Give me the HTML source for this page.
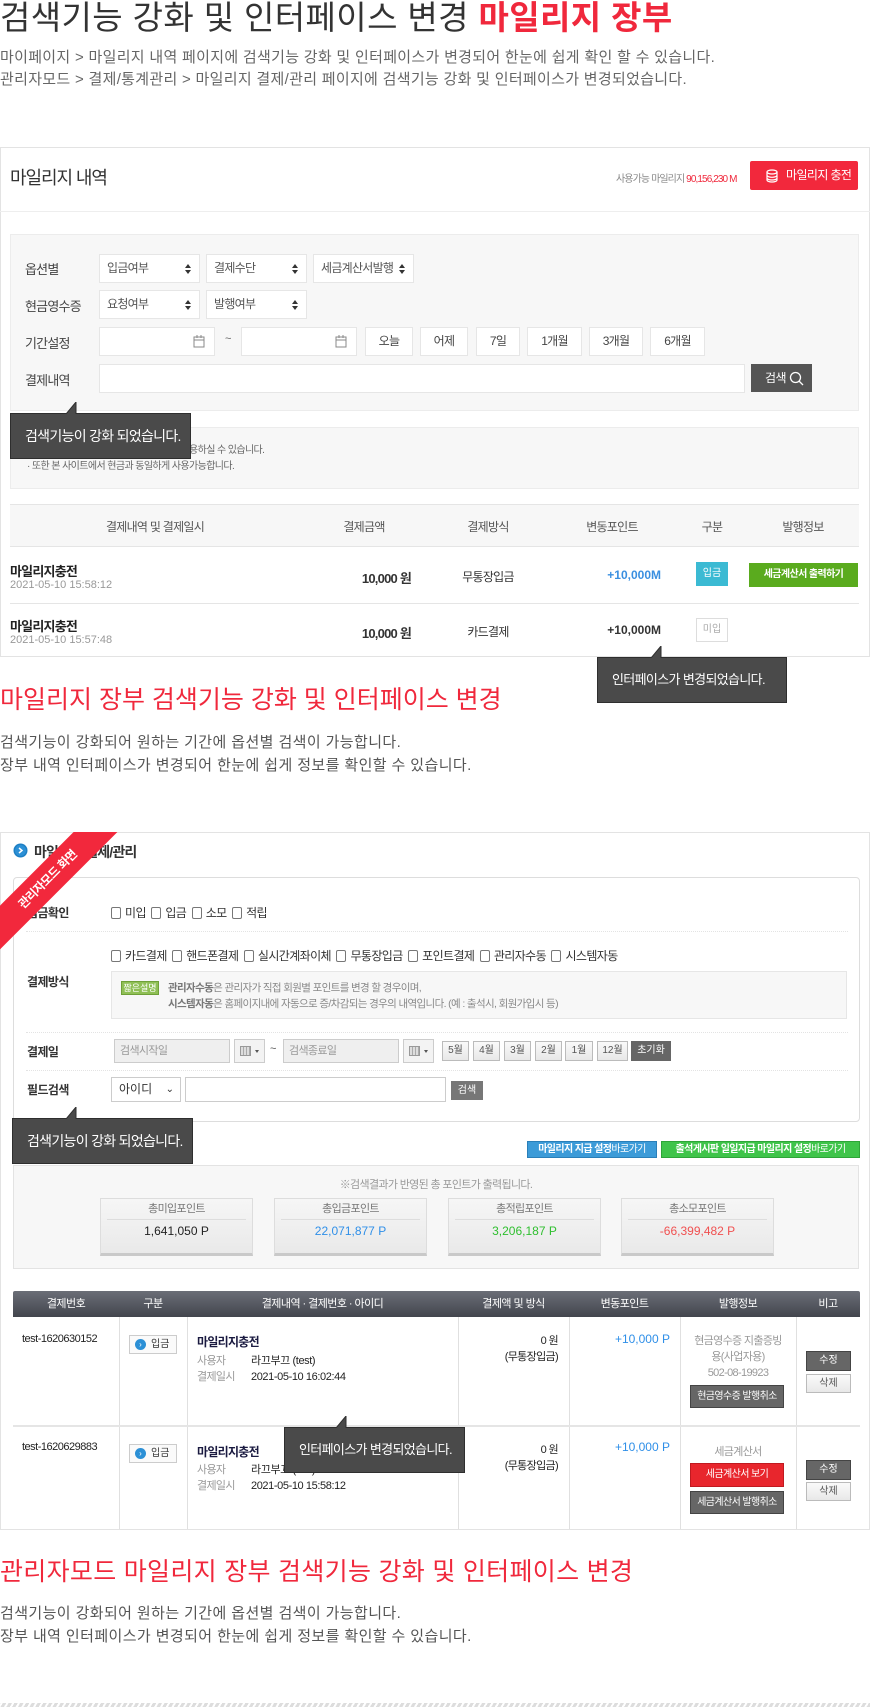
<!DOCTYPE html>
<html><head><meta charset="utf-8">
<style>
*{margin:0;padding:0;box-sizing:border-box}
body{width:870px;height:1707px;position:relative;background:#fff;font-family:"Liberation Sans","Noto Sans CJK KR",sans-serif;overflow:hidden;color:#333}
.a{position:absolute;white-space:nowrap}
.t{letter-spacing:-0.06em}
.box{position:absolute;border:1px solid #e3e3e3;background:#fff}
.sel{position:absolute;background:#fff;border:1px solid #e6e6e6;height:29px;font-size:12px;color:#555;line-height:27px;padding-left:7px;letter-spacing:-0.06em}
.sel:after{content:"";position:absolute;right:8px;top:9px;border-left:3px solid transparent;border-right:3px solid transparent;border-bottom:4px solid #333}
.sel:before{content:"";position:absolute;right:8px;top:15px;border-left:3px solid transparent;border-right:3px solid transparent;border-top:4px solid #333}
.btn{position:absolute;background:#fff;border:1px solid #e6e6e6;height:29px;font-size:12px;color:#444;line-height:27px;text-align:center;letter-spacing:-0.06em}
.lbl{position:absolute;font-size:13px;color:#444;letter-spacing:-0.06em}
.tip{position:absolute;background:#4a4a4a;border:1px solid #2e2e2e;color:#fff;font-size:14px;line-height:44px;padding-left:14px;letter-spacing:-0.05em}
.cb{display:inline-block;width:10px;height:12px;border:1px solid #777;border-radius:2px;vertical-align:-2px;margin-right:4px;background:#fff}
.sm{position:absolute;font-size:12px;color:#333;letter-spacing:-0.05em}
.gb{position:absolute;border:1px solid #bbb;background:linear-gradient(#fafafa,#e8e8e8);font-size:10px;color:#555;text-align:center;line-height:18px}
.sumb{position:absolute;background:linear-gradient(#f6f6f6,#e9e9e9);border:1px solid #ddd;border-bottom:3px solid #c9c9c9;width:153px;height:58px;text-align:center}
.th{position:absolute;top:1291px;font-size:11px;color:#fff;line-height:26px;text-align:center;letter-spacing:-0.05em}
.vl{position:absolute;width:1px;background:#e0e0e0}
</style></head><body>

<div class="a" style="left:0;top:-2px;font-size:33px;letter-spacing:0.4px;color:#333;line-height:40px">검색기능 강화 및 인터페이스 변경 <span style="color:#f0283c;font-weight:bold">마일리지 장부</span></div>
<div class="a" style="left:0;top:47px;font-size:15px;color:#666;letter-spacing:0.3px;line-height:22px">마이페이지 &gt; 마일리지 내역 페이지에 검색기능 강화 및 인터페이스가 변경되어 한눈에 쉽게 확인 할 수 있습니다.<br>관리자모드 &gt; 결제/통계관리 &gt; 마일리지 결제/관리 페이지에 검색기능 강화 및 인터페이스가 변경되었습니다.</div>

<!-- Card 1 -->
<div class="box" style="left:0;top:147px;width:870px;height:510px"></div>
<div class="a" style="left:0;top:211px;width:870px;height:1px;background:#eee"></div>
<div class="a t" style="left:10px;top:164px;font-size:18px;color:#333">마일리지 내역</div>
<div class="a" style="left:616px;top:170px;font-size:10px;color:#888;letter-spacing:-0.09em">사용가능 마일리지 <span style="color:#f0283c">90,156,230 M</span></div>
<div class="a" style="left:750px;top:161px;width:108px;height:29px;background:#f2283c;border-radius:2px;color:#fff;font-size:12px;line-height:29px;padding-left:36px;letter-spacing:-0.05em">마일리지 충전
<svg style="position:absolute;left:16px;top:8px" width="12" height="14" viewBox="0 0 12 14"><g fill="none" stroke="#fff" stroke-width="1.2"><ellipse cx="6" cy="3" rx="5" ry="2"/><path d="M1 3v8c0 1.1 2.2 2 5 2s5-.9 5-2V3M1 6.3c0 1.1 2.2 2 5 2s5-.9 5-2M1 9c0 1.1 2.2 2 5 2s5-.9 5-2"/></g></svg></div>

<div class="a" style="left:10px;top:234px;width:849px;height:177px;background:#f7f7f7;border:1px solid #ececec"></div>
<div class="lbl" style="left:25px;top:259px">옵션별</div>
<div class="lbl" style="left:25px;top:296px">현금영수증</div>
<div class="lbl" style="left:25px;top:333px">기간설정</div>
<div class="lbl" style="left:25px;top:370px">결제내역</div>
<div class="sel" style="left:99px;top:254px;width:101px">입금여부</div>
<div class="sel" style="left:206px;top:254px;width:101px">결제수단</div>
<div class="sel" style="left:313px;top:254px;width:101px">세금계산서발행</div>
<div class="sel" style="left:99px;top:290px;width:101px">요청여부</div>
<div class="sel" style="left:206px;top:290px;width:101px">발행여부</div>
<div class="btn" style="left:99px;top:327px;width:116px"></div>
<div class="btn" style="left:241px;top:327px;width:116px"></div>
<svg class="a" style="left:193px;top:335px" width="12" height="13"><rect x="1" y="2" width="10" height="10" fill="none" stroke="#888"/><path d="M1 5h10M4 0v3M8 0v3" stroke="#888"/></svg>
<svg class="a" style="left:335px;top:335px" width="12" height="13"><rect x="1" y="2" width="10" height="10" fill="none" stroke="#888"/><path d="M1 5h10M4 0v3M8 0v3" stroke="#888"/></svg>
<div class="a" style="left:225px;top:333px;font-size:11px;color:#666">~</div>
<div class="btn" style="left:365px;top:327px;width:48px">오늘</div>
<div class="btn" style="left:420px;top:327px;width:48px">어제</div>
<div class="btn" style="left:476px;top:327px;width:44px">7일</div>
<div class="btn" style="left:527px;top:327px;width:55px">1개월</div>
<div class="btn" style="left:589px;top:327px;width:54px">3개월</div>
<div class="btn" style="left:650px;top:327px;width:55px">6개월</div>
<div class="btn" style="left:99px;top:364px;width:646px"></div>
<div class="a" style="left:751px;top:364px;width:61px;height:28px;background:#555;color:#fff;font-size:12px;line-height:28px;padding-left:14px;letter-spacing:-0.05em">검색
<svg style="position:absolute;left:38px;top:7px" width="15" height="15"><circle cx="6.5" cy="6.5" r="5" fill="none" stroke="#fff" stroke-width="1.3"/><path d="M10 10l4 4" stroke="#fff" stroke-width="1.3"/></svg></div>

<div class="a" style="left:10px;top:427px;width:849px;height:62px;background:#f7f7f7;border:1px solid #ececec"></div>
<div class="a t" style="left:27px;top:443px;font-size:10px;color:#666;line-height:16px">· 본 마일리지는 유효기간 없이 언제든지 사용하실 수 있습니다.<br>· 또한 본 사이트에서 현금과 동일하게 사용가능합니다.</div>

<div class="tip" style="left:10px;top:413px;width:181px;height:46px">검색기능이 강화 되었습니다.</div>
<svg class="a" style="left:66px;top:402px" width="12" height="12"><polygon points="0,12 10,0 10,12" fill="#4a4a4a"/><polyline points="0,12 10,0 10,12" fill="none" stroke="#2e2e2e"/></svg>

<div class="a" style="left:10px;top:504px;width:849px;height:43px;background:#f7f7f7;border-top:1px solid #e5e5e5;border-bottom:1px solid #e5e5e5"></div>
<div class="a t" style="left:0;top:518px;width:310px;text-align:center;font-size:12px;color:#555">결제내역 및 결제일시</div>
<div class="a t" style="left:314px;top:518px;width:100px;text-align:center;font-size:12px;color:#555">결제금액</div>
<div class="a t" style="left:438px;top:518px;width:100px;text-align:center;font-size:12px;color:#555">결제방식</div>
<div class="a t" style="left:562px;top:518px;width:100px;text-align:center;font-size:12px;color:#555">변동포인트</div>
<div class="a t" style="left:662px;top:518px;width:100px;text-align:center;font-size:12px;color:#555">구분</div>
<div class="a t" style="left:753px;top:518px;width:100px;text-align:center;font-size:12px;color:#555">발행정보</div>

<div class="a t" style="left:10px;top:561px;font-size:13px;font-weight:bold;color:#222">마일리지충전</div>
<div class="a" style="left:10px;top:579px;font-size:11px;color:#999">2021-05-10 15:58:12</div>
<div class="a t" style="left:300px;top:568px;width:111px;text-align:right;font-size:13px;font-weight:bold;color:#333">10,000 원</div>
<div class="a t" style="left:438px;top:568px;width:100px;text-align:center;font-size:12px;color:#333">무통장입금</div>
<div class="a" style="left:560px;top:568px;width:101px;text-align:right;font-size:12px;font-weight:bold;color:#3a8fe0">+10,000M</div>
<div class="a" style="left:696px;top:562px;width:32px;height:24px;background:#3bbad3;color:#fff;font-size:10px;text-align:center;line-height:24px">입금</div>
<div class="a" style="left:749px;top:563px;width:109px;height:24px;background:#5aab1e;color:#fff;font-size:10px;text-align:center;line-height:24px;font-weight:bold;letter-spacing:-0.06em">세금계산서 출력하기</div>
<div class="a" style="left:10px;top:603px;width:849px;height:1px;background:#e5e5e5"></div>
<div class="a t" style="left:10px;top:616px;font-size:13px;font-weight:bold;color:#222">마일리지충전</div>
<div class="a" style="left:10px;top:634px;font-size:11px;color:#999">2021-05-10 15:57:48</div>
<div class="a t" style="left:300px;top:623px;width:111px;text-align:right;font-size:13px;font-weight:bold;color:#333">10,000 원</div>
<div class="a t" style="left:438px;top:623px;width:100px;text-align:center;font-size:12px;color:#333">카드결제</div>
<div class="a" style="left:560px;top:623px;width:101px;text-align:right;font-size:12px;font-weight:bold;color:#333">+10,000M</div>
<div class="a" style="left:696px;top:618px;width:32px;height:24px;border:1px solid #ddd;color:#aaa;font-size:10px;text-align:center;line-height:22px">미입</div>

<div class="tip" style="left:597px;top:657px;width:190px;height:46px;font-size:13px">인터페이스가 변경되었습니다.</div>
<svg class="a" style="left:651px;top:646px" width="12" height="12"><polygon points="0,12 10,0 10,12" fill="#4a4a4a"/><polyline points="0,12 10,0 10,12" fill="none" stroke="#2e2e2e"/></svg>

<div class="a" style="left:0;top:683px;font-size:25px;color:#f0283c;letter-spacing:0;line-height:34px">마일리지 장부 검색기능 강화 및 인터페이스 변경</div>
<div class="a" style="left:0;top:731px;font-size:15px;color:#555;letter-spacing:0.4px;line-height:23px">검색기능이 강화되어 원하는 기간에 옵션별 검색이 가능합니다.<br>장부 내역 인터페이스가 변경되어 한눈에 쉽게 정보를 확인할 수 있습니다.</div>

<!-- Card 2 -->
<div class="box" style="left:0;top:832px;width:870px;height:698px"></div>
<svg class="a" style="left:13px;top:843px" width="15" height="15"><circle cx="7.5" cy="7.5" r="7" fill="#1d7fc4"/><circle cx="7.5" cy="7.5" r="5.5" fill="#2c90d6"/><path d="M6 5l3 2.5L6 10" fill="none" stroke="#fff" stroke-width="1.5"/></svg>
<div class="a t" style="left:34px;top:842px;font-size:14px;font-weight:bold;color:#333">마일리지 결제/관리</div>

<div class="a" style="left:13px;top:877px;width:847px;height:245px;border:1px solid #ddd;border-radius:4px;background:#fff"></div>
<div class="sm" style="left:27px;top:904px;font-weight:bold">입금확인</div>
<div class="sm" style="left:111px;top:904px"><span class="cb"></span>미입&nbsp; <span class="cb"></span>입금&nbsp; <span class="cb"></span>소모&nbsp; <span class="cb"></span>적립</div>
<div class="a" style="left:26px;top:931px;width:822px;border-top:1px dotted #e3e3e3"></div>
<div class="sm" style="left:111px;top:947px"><span class="cb"></span>카드결제&nbsp; <span class="cb"></span>핸드폰결제&nbsp; <span class="cb"></span>실시간계좌이체&nbsp; <span class="cb"></span>무통장입금&nbsp; <span class="cb"></span>포인트결제&nbsp; <span class="cb"></span>관리자수동&nbsp; <span class="cb"></span>시스템자동</div>
<div class="sm" style="left:27px;top:973px;font-weight:bold">결제방식</div>
<div class="a" style="left:111px;top:971px;width:736px;height:48px;background:#f7f7f7;border:1px solid #e6e6e6"></div>
<div class="a" style="left:121px;top:981px;width:38px;height:14px;background:#8fbf55;border:1px solid #6fa038;color:#fff;font-size:9px;text-align:center;line-height:12px">짧은설명</div>
<div class="a t" style="left:168px;top:980px;font-size:10.5px;color:#888;line-height:16px"><b style="color:#777">관리자수동</b>은 관리자가 직접 회원별 포인트를 변경 할 경우이며,<br><b style="color:#777">시스템자동</b>은 홈페이지내에 자동으로 증/차감되는 경우의 내역입니다. (예 : 출석시, 회원가입시 등)</div>
<div class="a" style="left:26px;top:1032px;width:822px;border-top:1px dotted #e3e3e3"></div>
<div class="sm" style="left:27px;top:1043px;font-weight:bold">결제일</div>
<div class="a t" style="left:114px;top:1039px;width:116px;height:24px;border:1px solid #ccc;background:#efefef;font-size:11px;color:#999;line-height:22px;padding-left:5px">검색시작일</div>
<div class="a" style="left:234px;top:1039px;width:31px;height:24px;border:1px solid #ccc;background:#f3f3f3"><span style="position:absolute;left:5px;top:6px;width:11px;height:10px;border:1px solid #999;background:repeating-linear-gradient(90deg,#ddd 0 2px,#aaa 2px 3px)"></span><span style="position:absolute;left:20px;top:10px;border-left:2px solid transparent;border-right:2px solid transparent;border-top:3px solid #555"></span></div>
<div class="a" style="left:270px;top:1043px;font-size:11px;color:#555">~</div>
<div class="a t" style="left:283px;top:1039px;width:116px;height:24px;border:1px solid #ccc;background:#efefef;font-size:11px;color:#999;line-height:22px;padding-left:5px">검색종료일</div>
<div class="a" style="left:403px;top:1039px;width:31px;height:24px;border:1px solid #ccc;background:#f3f3f3"><span style="position:absolute;left:5px;top:6px;width:11px;height:10px;border:1px solid #999;background:repeating-linear-gradient(90deg,#ddd 0 2px,#aaa 2px 3px)"></span><span style="position:absolute;left:20px;top:10px;border-left:2px solid transparent;border-right:2px solid transparent;border-top:3px solid #555"></span></div>
<div class="gb" style="left:442px;top:1041px;width:27px;height:20px">5월</div>
<div class="gb" style="left:473px;top:1041px;width:27px;height:20px">4월</div>
<div class="gb" style="left:504px;top:1041px;width:27px;height:20px">3월</div>
<div class="gb" style="left:535px;top:1041px;width:27px;height:20px">2월</div>
<div class="gb" style="left:565px;top:1041px;width:28px;height:20px">1월</div>
<div class="gb" style="left:597px;top:1041px;width:31px;height:20px">12월</div>
<div class="a" style="left:631px;top:1041px;width:40px;height:20px;background:#666;color:#fff;font-size:10px;text-align:center;line-height:20px">초기화</div>
<div class="a" style="left:26px;top:1070px;width:822px;border-top:1px dotted #e3e3e3"></div>
<div class="sm" style="left:27px;top:1081px;font-weight:bold">필드검색</div>
<div class="a" style="left:111px;top:1077px;width:70px;height:25px;border:1px solid #ccc;font-size:12px;line-height:23px;padding-left:7px;color:#333">아이디<span style="position:absolute;right:6px;top:0;font-size:10px">⌄</span></div>
<div class="a" style="left:185px;top:1077px;width:261px;height:25px;border:1px solid #ccc"></div>
<div class="a" style="left:451px;top:1081px;width:32px;height:19px;background:#777;color:#fff;font-size:10px;text-align:center;line-height:19px">검색</div>

<div class="tip" style="left:12px;top:1118px;width:181px;height:46px">검색기능이 강화 되었습니다.</div>
<svg class="a" style="left:66px;top:1107px" width="12" height="12"><polygon points="0,12 10,0 10,12" fill="#4a4a4a"/><polyline points="0,12 10,0 10,12" fill="none" stroke="#2e2e2e"/></svg>

<div class="a" style="left:527px;top:1141px;width:130px;height:17px;background:#3c9bd8;border:1px solid #2a7fb8;color:#fff;font-size:10px;text-align:center;line-height:15px;font-weight:bold;letter-spacing:-0.06em">마일리지 지급 설정<span style="font-weight:normal">바로가기</span></div>
<div class="a" style="left:661px;top:1141px;width:199px;height:17px;background:#3fc44a;border:1px solid #2ea538;color:#fff;font-size:10px;text-align:center;line-height:15px;font-weight:bold;letter-spacing:-0.06em">출석게시판 일일지급 마일리지 설정<span style="font-weight:normal">바로가기</span></div>

<div class="a" style="left:13px;top:1165px;width:846px;height:104px;background:#f7f7f7;border:1px solid #e3e3e3"></div>
<div class="a t" style="left:13px;top:1176px;width:846px;text-align:center;font-size:11px;color:#999">※검색결과가 반영된 총 포인트가 출력됩니다.</div>
<div class="sumb" style="left:100px;top:1198px"><div style="font-size:11px;color:#777;line-height:20px;margin:0 6px;border-bottom:1px solid #ddd" class="t">총미입포인트</div><div style="font-size:12px;color:#222;line-height:22px">1,641,050 P</div></div>
<div class="sumb" style="left:274px;top:1198px"><div style="font-size:11px;color:#777;line-height:20px;margin:0 6px;border-bottom:1px solid #ddd" class="t">총입금포인트</div><div style="font-size:12px;color:#2f8fe8;line-height:22px">22,071,877 P</div></div>
<div class="sumb" style="left:448px;top:1198px"><div style="font-size:11px;color:#777;line-height:20px;margin:0 6px;border-bottom:1px solid #ddd" class="t">총적립포인트</div><div style="font-size:12px;color:#2fbf2f;line-height:22px">3,206,187 P</div></div>
<div class="sumb" style="left:621px;top:1198px"><div style="font-size:11px;color:#777;line-height:20px;margin:0 6px;border-bottom:1px solid #ddd" class="t">총소모포인트</div><div style="font-size:12px;color:#f05050;line-height:22px">-66,399,482 P</div></div>

<div class="a" style="left:13px;top:1291px;width:847px;height:26px;background:linear-gradient(#6b6e77,#42454d);border-radius:2px 2px 0 0"></div>
<div class="th" style="left:13px;width:106px">결제번호</div>
<div class="th" style="left:119px;width:68px">구분</div>
<div class="th" style="left:187px;width:271px">결제내역 · 결제번호 · 아이디</div>
<div class="th" style="left:458px;width:111px">결제액 및 방식</div>
<div class="th" style="left:569px;width:111px">변동포인트</div>
<div class="th" style="left:680px;width:116px">발행정보</div>
<div class="th" style="left:796px;width:64px">비고</div>
<div class="vl" style="left:119px;top:1317px;height:212px"></div>
<div class="vl" style="left:187px;top:1317px;height:212px"></div>
<div class="vl" style="left:458px;top:1317px;height:212px"></div>
<div class="vl" style="left:569px;top:1317px;height:212px"></div>
<div class="vl" style="left:680px;top:1317px;height:212px"></div>
<div class="vl" style="left:796px;top:1317px;height:212px"></div>
<div class="a" style="left:13px;top:1425px;width:847px;height:2px;background:#e5e5e5"></div>

<!-- rows -->
<div class="a" style="left:22px;top:1333px;font-size:11px;color:#222;letter-spacing:-0.5px">test-1620630152</div>
<div class="a" style="left:129px;top:1335px;width:48px;height:19px;border:1px solid #ccc;background:#fafafa;font-size:10px;line-height:17px;padding-left:21px;color:#333">입금<span style="position:absolute;left:5px;top:3px;width:11px;height:11px;border-radius:50%;background:#2c90d6;color:#fff;font-size:8px;line-height:11px;text-align:center">›</span></div>
<div class="a t" style="left:197px;top:1333px;font-size:12px;font-weight:bold;color:#1a1a40">마일리지충전</div>
<div class="a t" style="left:197px;top:1353px;font-size:11px;color:#999;line-height:16px">사용자<br>결제일시</div>
<div class="a" style="left:251px;top:1353px;font-size:11px;color:#222;line-height:16px;letter-spacing:-0.4px">라끄부끄 (test)<br>2021-05-10 16:02:44</div>
<div class="a t" style="left:458px;top:1333px;width:100px;text-align:right;font-size:11px;color:#222;line-height:16px">0 원<br>(무통장입금)</div>
<div class="a" style="left:569px;top:1332px;width:101px;text-align:right;font-size:12px;color:#2f8fe8">+10,000 P</div>
<div class="a t" style="left:680px;top:1333px;width:116px;text-align:center;font-size:11px;color:#999;line-height:16px">현금영수증 지출증빙<br>용(사업자용)<br>502-08-19923</div>
<div class="a" style="left:690px;top:1385px;width:94px;height:23px;background:#666;border:1px solid #444;color:#fff;font-size:10px;text-align:center;line-height:21px;letter-spacing:-0.06em">현금영수증 발행취소</div>
<div class="a" style="left:806px;top:1351px;width:45px;height:20px;background:#666;border:1px solid #444;color:#fff;font-size:10px;text-align:center;line-height:18px">수정</div>
<div class="gb" style="left:806px;top:1374px;width:45px;height:19px">삭제</div>

<div class="a" style="left:22px;top:1441px;font-size:11px;color:#222;letter-spacing:-0.5px">test-1620629883</div>
<div class="a" style="left:129px;top:1444px;width:48px;height:19px;border:1px solid #ccc;background:#fafafa;font-size:10px;line-height:17px;padding-left:21px;color:#333">입금<span style="position:absolute;left:5px;top:3px;width:11px;height:11px;border-radius:50%;background:#2c90d6;color:#fff;font-size:8px;line-height:11px;text-align:center">›</span></div>
<div class="a t" style="left:197px;top:1443px;font-size:12px;font-weight:bold;color:#1a1a40">마일리지충전</div>
<div class="a t" style="left:197px;top:1462px;font-size:11px;color:#999;line-height:16px">사용자<br>결제일시</div>
<div class="a" style="left:251px;top:1462px;font-size:11px;color:#222;line-height:16px;letter-spacing:-0.4px">라끄부끄 (test)<br>2021-05-10 15:58:12</div>
<div class="a t" style="left:458px;top:1442px;width:100px;text-align:right;font-size:11px;color:#222;line-height:16px">0 원<br>(무통장입금)</div>
<div class="a" style="left:569px;top:1440px;width:101px;text-align:right;font-size:12px;color:#2f8fe8">+10,000 P</div>
<div class="a t" style="left:680px;top:1443px;width:116px;text-align:center;font-size:11px;color:#999">세금계산서</div>
<div class="a" style="left:690px;top:1463px;width:94px;height:24px;background:#e8262d;border:1px solid #c01a20;color:#fff;font-size:10px;text-align:center;line-height:22px;letter-spacing:-0.06em">세금계산서 보기</div>
<div class="a" style="left:690px;top:1491px;width:94px;height:23px;background:#666;border:1px solid #444;color:#fff;font-size:10px;text-align:center;line-height:21px;letter-spacing:-0.06em">세금계산서 발행취소</div>
<div class="a" style="left:806px;top:1460px;width:45px;height:20px;background:#666;border:1px solid #444;color:#fff;font-size:10px;text-align:center;line-height:18px">수정</div>
<div class="gb" style="left:806px;top:1482px;width:45px;height:19px">삭제</div>

<div class="tip" style="left:284px;top:1427px;width:181px;height:46px;font-size:13px">인터페이스가 변경되었습니다.</div>
<svg class="a" style="left:336px;top:1416px" width="12" height="12"><polygon points="0,12 10,0 10,12" fill="#4a4a4a"/><polyline points="0,12 10,0 10,12" fill="none" stroke="#2e2e2e"/></svg>

<!-- ribbon -->
<div class="a" style="left:0;top:832px;width:140px;height:130px;overflow:hidden">
<div style="position:absolute;left:-52px;top:32px;width:200px;height:31px;background:#f2283c;transform:rotate(-45deg);color:#fff;font-size:12px;font-weight:bold;text-align:center;line-height:31px;letter-spacing:-0.5px">관리자모드 화면</div>
</div>

<div class="a" style="left:0;top:1555px;font-size:25px;color:#f0283c;letter-spacing:0.3px;line-height:34px">관리자모드 마일리지 장부 검색기능 강화 및 인터페이스 변경</div>
<div class="a" style="left:0;top:1602px;font-size:15px;color:#555;letter-spacing:0.4px;line-height:23px">검색기능이 강화되어 원하는 기간에 옵션별 검색이 가능합니다.<br>장부 내역 인터페이스가 변경되어 한눈에 쉽게 정보를 확인할 수 있습니다.</div>

<div class="a" style="left:0;top:1703px;width:870px;height:4px;background:repeating-linear-gradient(-60deg,#ddd 0 3px,#fff 3px 5px)"></div>
</body></html>
